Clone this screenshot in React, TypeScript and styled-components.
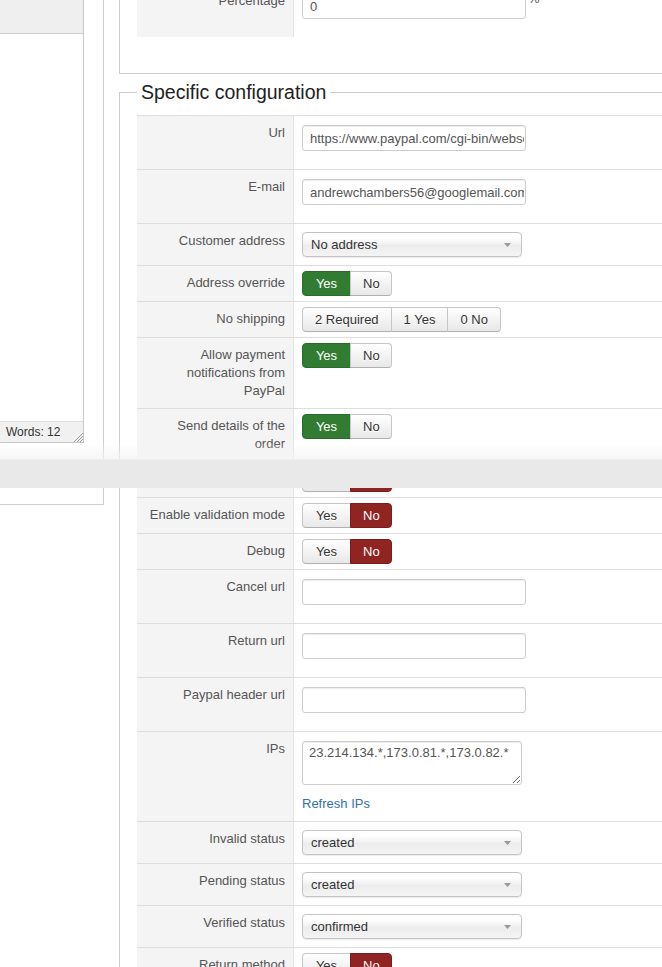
import React from 'react';
import styled, { createGlobalStyle, css } from 'styled-components';

const GlobalStyle = createGlobalStyle`
  html, body { margin: 0; padding: 0; background: #fff; }
  body {
    font-family: "Liberation Sans", Arial, Helvetica, sans-serif;
    font-size: 13px;
    line-height: 18px;
    color: #333;
    overflow: hidden;
  }
  * { box-sizing: border-box; }
`;

const Page = styled.div`
  position: relative;
  width: 662px;
  height: 967px;
  overflow: hidden;
  display: flex;
  align-items: flex-start;
  gap: 15px;
`;

/* ---------- left editor column ---------- */
const SideBox = styled.div`
  flex: 0 0 104px;
  height: 505px;
  border-right: 1px solid #cfcfcf;
  border-bottom: 1px solid #cfcfcf;
`;

const Editor = styled.div`
  width: 84px;
  height: 443px;
  border-right: 1px solid #c8c8c8;
  display: flex;
  flex-direction: column;
`;

const EditorToolbar = styled.div`
  flex: none;
  height: 34px;
  background: #efefef;
  border-bottom: 1px solid #cccccc;
`;

const EditorBody = styled.div`
  flex: 1;
  background: #fff;
`;

const StatusBar = styled.div`
  flex: none;
  height: 22px;
  display: flex;
  justify-content: space-between;
  align-items: flex-end;
  padding-left: 6px;
  background: #f1f1f1;
  border-top: 1px solid #dcdcdc;
  border-bottom: 1px solid #c8c8c8;
  font-size: 12px;
  line-height: 20px;
  color: #333;
`;

const Words = styled.span`
  align-self: flex-start;
`;

/* ---------- main configuration column ---------- */
const Main = styled.div`
  flex: 0 0 600px;
  display: flex;
  flex-direction: column;
`;

const Fieldset = styled.fieldset<{ $offset: number; $padTop: number; $padBottom: number }>`
  margin: ${(p) => p.$offset}px 0 0;
  min-width: 0;
  border: 1px solid #cccccc;
  padding: ${(p) => p.$padTop}px 17px ${(p) => p.$padBottom}px;
`;

const Legend = styled.legend`
  margin: 0;
  padding: 0 4px;
  font-size: 19.5px;
  line-height: 24px;
  color: #222;
  font-weight: normal;
`;

const Table = styled.div`
  display: flex;
  flex-direction: column;
`;

const Row = styled.div`
  display: flex;
  border-top: 1px solid #dddddd;
`;

const Label = styled.div`
  flex: 0 0 157px;
  padding: 8px 8px;
  background: #f4f4f4;
  border-right: 1px solid #e4e4e4;
  text-align: right;
  color: #555;
`;

const Value = styled.div`
  flex: 1;
  display: flex;
  flex-direction: column;
  align-items: flex-start;
  padding: 0 8px;
`;

const InlineValue = styled(Value)`
  flex-direction: row;
`;

const TextInput = styled.input`
  display: block;
  width: 224px;
  height: 26px;
  margin: 9px 0 18px;
  padding: 3px 1px 3px 7px;
  border: 1px solid #cccccc;
  border-radius: 3px;
  box-shadow: inset 0 1px 1px rgba(0, 0, 0, 0.075);
  font: inherit;
  color: #555;
  background: #fff;
  outline: none;
`;

const Unit = styled.span`
  margin: 7px 0 0 2px;
  line-height: 16px;
  color: #555;
`;

const TextArea = styled.textarea`
  display: block;
  width: 220px;
  height: 44px;
  margin: 9px 0 10px;
  padding: 2px 6px;
  border: 1px solid #cccccc;
  border-radius: 3px;
  box-shadow: inset 0 1px 1px rgba(0, 0, 0, 0.075);
  font: inherit;
  color: #555;
  outline: none;
`;

const Link = styled.a`
  color: #3570a9;
  text-decoration: none;
  line-height: 18px;
  margin-bottom: 8px;
`;

const Select = styled.div`
  width: 220px;
  height: 25px;
  margin: 8px 0;
  padding: 0 10px 0 8px;
  display: flex;
  align-items: center;
  justify-content: space-between;
  border: 1px solid #c4c4c4;
  border-radius: 4px;
  background: linear-gradient(#ffffff 20%, #f0f0f0 50%, #ececec 52%, #f4f4f4);
  box-shadow: 0 1px 1px rgba(0, 0, 0, 0.08);
  color: #333;
`;

const BtnGroup = styled.div`
  display: inline-flex;
  margin: 5px 0;
`;

type Tone = 'default' | 'success' | 'danger';

const toneStyles: Record<Tone, ReturnType<typeof css>> = {
  default: css`
    color: #333;
    background: linear-gradient(#ffffff, #e8e8e8);
    border-color: #c6c6c6 #c6c6c6 #b0b0b0;
    text-shadow: 0 1px 0 #fff;
  `,
  success: css`
    color: #fff;
    background: #327b32;
    border-color: #2a6a2a;
  `,
  danger: css`
    color: #fff;
    background: #8f2421;
    border-color: #7a1d1b;
  `,
};

const Btn = styled.span<{ $tone: Tone; $w?: number }>`
  height: 25px;
  padding: 0 12px;
  ${(p) => (p.$w ? `width: ${p.$w}px;` : '')}
  text-align: center;
  line-height: 23px;
  border: 1px solid;
  ${(p) => toneStyles[p.$tone]}
  & + & { margin-left: -1px; }
  &:first-child { border-radius: 4px 0 0 4px; }
  &:last-child { border-radius: 0 4px 4px 0; }
`;

/* ---------- sticky bar over the content ---------- */
const StickyBar = styled.div`
  position: absolute;
  left: 0;
  right: 0;
  top: 459px;
  height: 29px;
  background: #e9e9e9;
  border-top: 1px solid #d8d8d8;
  &::before {
    content: '';
    position: absolute;
    left: 0;
    right: 0;
    bottom: 100%;
    height: 17px;
    background: linear-gradient(rgba(244, 244, 244, 0), rgba(244, 244, 244, 0.85));
  }
`;

/* ---------- small drawings ---------- */
const Caret = () => (
  <svg width="7" height="4" viewBox="0 0 7 4">
    <polygon points="0,0 7,0 3.5,4" fill="#9a9a9a" />
  </svg>
);

const Grip = () => (
  <svg width="10" height="10" viewBox="0 0 10 10">
    <g stroke="#9a9a9a" strokeWidth="1">
      <line x1="10" y1="1" x2="1" y2="10" />
      <line x1="10" y1="4" x2="4" y2="10" />
      <line x1="10" y1="7" x2="7" y2="10" />
    </g>
  </svg>
);

/* ---------- rows ---------- */
const Toggle = ({ on }: { on: boolean }) => (
  <BtnGroup>
    <Btn $tone={on ? 'success' : 'default'} $w={49}>Yes</Btn>
    <Btn $tone={on ? 'default' : 'danger'} $w={42}>No</Btn>
  </BtnGroup>
);

const InputRow = ({ label, value }: { label: string; value: string }) => (
  <Row>
    <Label>{label}</Label>
    <Value>
      <TextInput readOnly value={value} />
    </Value>
  </Row>
);

const SelectRow = ({ label, value }: { label: string; value: string }) => (
  <Row>
    <Label>{label}</Label>
    <Value>
      <Select>
        <span>{value}</span>
        <Caret />
      </Select>
    </Value>
  </Row>
);

const ToggleRow = ({ label, on }: { label: React.ReactNode; on: boolean }) => (
  <Row>
    <Label>{label}</Label>
    <Value>
      <Toggle on={on} />
    </Value>
  </Row>
);

export default function App() {
  return (
    <>
      <GlobalStyle />
      <Page>
        <SideBox>
          <Editor>
            <EditorToolbar />
            <EditorBody />
            <StatusBar>
              <Words>Words: 12</Words>
              <Grip />
            </StatusBar>
          </Editor>
        </SideBox>

        <Main>
          <Fieldset $offset={-28} $padTop={10} $padBottom={36}>
            <Table>
              <Row>
                <Label>Percentage</Label>
                <InlineValue>
                  <TextInput readOnly value="0" />
                  <Unit>%</Unit>
                </InlineValue>
              </Row>
            </Table>
          </Fieldset>

          <Fieldset $offset={6} $padTop={11} $padBottom={20}>
            <Legend>Specific configuration</Legend>
            <Table>
              <InputRow label="Url" value="https://www.paypal.com/cgi-bin/webscr" />
              <InputRow label="E-mail" value="andrewchambers56@googlemail.com" />
              <SelectRow label="Customer address" value="No address" />
              <ToggleRow label="Address override" on />
              <Row>
                <Label>No shipping</Label>
                <Value>
                  <BtnGroup>
                    <Btn $tone="default">2 Required</Btn>
                    <Btn $tone="default">1 Yes</Btn>
                    <Btn $tone="default">0 No</Btn>
                  </BtnGroup>
                </Value>
              </Row>
              <ToggleRow label="Allow payment notifications from PayPal" on />
              <ToggleRow label="Send details of the order" on />
              <ToggleRow label="Log" on={false} />
              <ToggleRow label="Enable validation mode" on={false} />
              <ToggleRow label="Debug" on={false} />
              <InputRow label="Cancel url" value="" />
              <InputRow label="Return url" value="" />
              <InputRow label="Paypal header url" value="" />
              <Row>
                <Label>IPs</Label>
                <Value>
                  <TextArea readOnly value="23.214.134.*,173.0.81.*,173.0.82.*" />
                  <Link href="#">Refresh IPs</Link>
                </Value>
              </Row>
              <SelectRow label="Invalid status" value="created" />
              <SelectRow label="Pending status" value="created" />
              <SelectRow label="Verified status" value="confirmed" />
              <ToggleRow label="Return method" on={false} />
            </Table>
          </Fieldset>
        </Main>

        <StickyBar />
      </Page>
    </>
  );
}
